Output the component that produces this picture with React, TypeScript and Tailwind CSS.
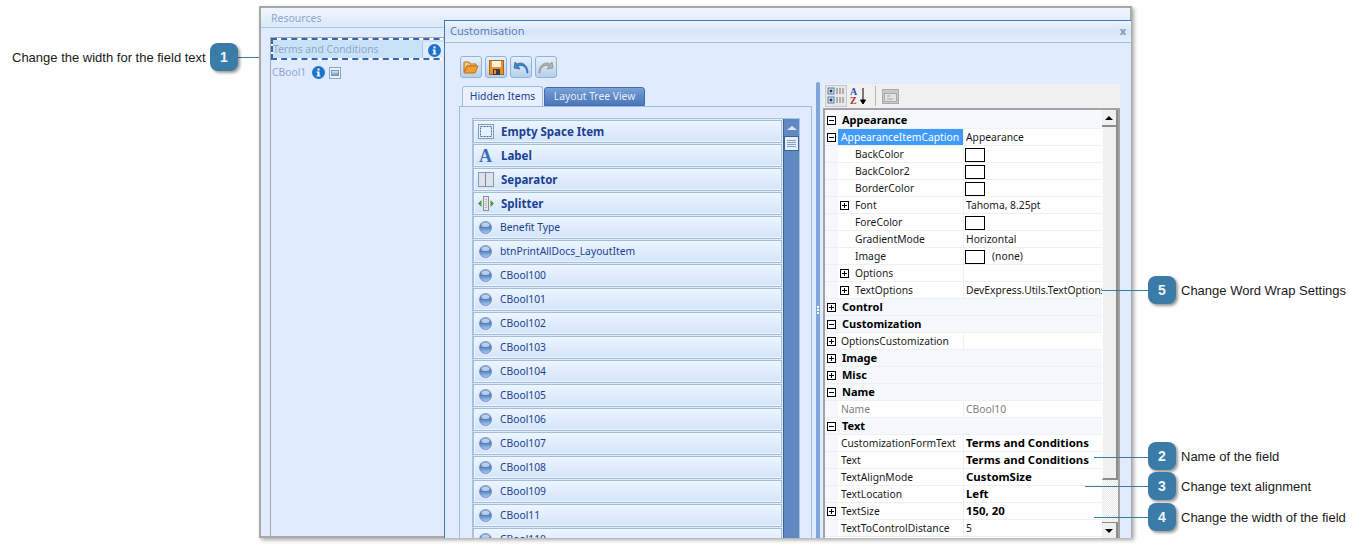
import React from "react";

type PropRow = {
  name: string;
  value?: string;
  category?: boolean;
  expander?: "plus" | "minus";
  nested?: boolean;
  swatch?: boolean;
  boldValue?: boolean;
  muted?: boolean;
  selected?: boolean;
};

const tahoma = "font-['Noto_Sans','DejaVu_Sans',sans-serif]";

const PROP_ROWS: PropRow[] = [
  { name: "Appearance", category: true, expander: "minus" },
  { name: "AppearanceItemCaption", value: "Appearance", expander: "minus", selected: true },
  { name: "BackColor", nested: true, swatch: true },
  { name: "BackColor2", nested: true, swatch: true },
  { name: "BorderColor", nested: true, swatch: true },
  { name: "Font", nested: true, expander: "plus", value: "Tahoma, 8.25pt" },
  { name: "ForeColor", nested: true, swatch: true },
  { name: "GradientMode", nested: true, value: "Horizontal" },
  { name: "Image", nested: true, swatch: true, value: "(none)" },
  { name: "Options", nested: true, expander: "plus" },
  { name: "TextOptions", nested: true, expander: "plus", value: "DevExpress.Utils.TextOptions" },
  { name: "Control", category: true, expander: "plus" },
  { name: "Customization", category: true, expander: "minus" },
  { name: "OptionsCustomization", expander: "plus" },
  { name: "Image", category: true, expander: "plus" },
  { name: "Misc", category: true, expander: "plus" },
  { name: "Name", category: true, expander: "minus" },
  { name: "Name", value: "CBool10", muted: true },
  { name: "Text", category: true, expander: "minus" },
  { name: "CustomizationFormText", value: "Terms and Conditions", boldValue: true },
  { name: "Text", value: "Terms and Conditions", boldValue: true },
  { name: "TextAlignMode", value: "CustomSize", boldValue: true },
  { name: "TextLocation", value: "Left", boldValue: true },
  { name: "TextSize", value: "150, 20", boldValue: true, expander: "plus" },
  { name: "TextToControlDistance", value: "5" },
];

const BOOL_ITEMS = [
  "Benefit Type",
  "btnPrintAllDocs_LayoutItem",
  "CBool100",
  "CBool101",
  "CBool102",
  "CBool103",
  "CBool104",
  "CBool105",
  "CBool106",
  "CBool107",
  "CBool108",
  "CBool109",
  "CBool11",
  "CBool110",
];

const CALLOUTS = [
  { n: 5, top: "top-[276px]", label: "Change Word Wrap Settings", line: "top-[290px] left-[1102px] w-[46px]" },
  { n: 2, top: "top-[442px]", label: "Name of the field", line: "top-[457px] left-[1094px] w-[54px]" },
  { n: 3, top: "top-[472px]", label: "Change text alignment", line: "top-[486px] left-[1085px] w-[63px]" },
  { n: 4, top: "top-[503px]", label: "Change the width of the field", line: "top-[517px] left-[1094px] w-[54px]" },
];

function Expander({ kind }: { kind: "plus" | "minus" }) {
  return (
    <svg width="9" height="9" viewBox="0 0 9 9" className="shrink-0">
      <rect x="0.5" y="0.5" width="8" height="8" fill="#fff" stroke="#000" />
      <path d="M2 4.5H7" stroke="#000" />
      {kind === "plus" ? <path d="M4.5 2V7" stroke="#000" /> : null}
    </svg>
  );
}

function InfoIcon() {
  return (
    <svg width="13" height="13" viewBox="0 0 13 13" className="shrink-0">
      <circle cx="6.5" cy="6.5" r="6.5" fill="#1b74c9" />
      <rect x="5.5" y="2.5" width="2" height="2" fill="#fff" />
      <path d="M4.5 5.5H7.5V9.5H8.5V10.5H4.5V9.5H5.5V6.5H4.5Z" fill="#fff" />
    </svg>
  );
}

function OrbIcon() {
  return (
    <svg width="13" height="13" viewBox="0 0 13 13">
      <defs>
        <linearGradient id="orb" x1="0" y1="0" x2="0" y2="1">
          <stop offset="0" stopColor="#8fb0dc" />
          <stop offset="0.45" stopColor="#4f7dbd" />
          <stop offset="1" stopColor="#b4cfee" />
        </linearGradient>
      </defs>
      <circle cx="6.5" cy="6.5" r="6" fill="url(#orb)" stroke="#5b83b8" strokeWidth="0.7" />
      <ellipse cx="6.5" cy="3.9" rx="4" ry="2.2" fill="#fff" opacity="0.55" />
    </svg>
  );
}

function ToolButton({ children }: { children: React.ReactNode }) {
  return (
    <div className="flex h-[22px] w-[22px] items-center justify-center rounded-[3px] border border-[#8fb3dc] bg-gradient-to-b from-[#e6f0fb] via-[#cfe0f4] to-[#b6cfec]">
      {children}
    </div>
  );
}

function ListRow({ label, bold, icon }: { label: string; bold?: boolean; icon: React.ReactNode }) {
  return (
    <div className="flex h-[23px] shrink-0 items-center border border-[#a3bedb] bg-gradient-to-b from-[#edf5fe] to-[#d3e5fa] shadow-[inset_0_0_0_1px_#eef5fd]">
      <div className="flex w-[23px] shrink-0 justify-center">{icon}</div>
      <span className={`${bold ? "ml-[4px] text-[11.5px] font-bold" : "ml-[3px] text-[10.3px]"} text-[#1c3f94]`}>{label}</span>
    </div>
  );
}

function PropertyRow({ row }: { row: PropRow }) {
  const bg = row.category ? "bg-[#f5f8fd]" : "bg-white";
  return (
    <div className={`flex h-[17px] shrink-0 border-b border-[#f0f0f0] ${bg}`}>
      <div className="flex w-[13px] shrink-0 items-center justify-center bg-[#f5f8fd]">
        {row.expander && !row.nested ? <Expander kind={row.expander} /> : null}
      </div>
      <div
        className={`flex w-[125px] shrink-0 items-center overflow-hidden whitespace-nowrap ${
          row.selected ? "bg-[#3f9bfb] text-white" : row.muted ? "text-[#808080]" : "text-[#1a1a1a]"
        } ${row.nested ? "pl-[2px]" : row.category ? "pl-[4px]" : "pl-[3px]"} ${
          row.category ? "text-[11px] font-bold text-black" : "pt-[1px]"
        }`}
      >
        {row.nested ? (
          <div className="flex w-[15px] shrink-0 items-center">
            {row.expander ? <Expander kind={row.expander} /> : null}
          </div>
        ) : null}
        {row.name}
      </div>
      {row.category ? null : (
        <div
          className={`flex min-w-0 flex-1 items-center gap-[7px] overflow-hidden whitespace-nowrap border-l border-[#f0f0f0] pl-[2px] ${
            row.boldValue ? "text-[11.4px] font-bold text-black" : row.muted ? "pt-[1px] text-[#808080]" : "pt-[1px] text-[#1a1a1a]"
          }`}
        >
          {row.swatch ? <div className="ml-[-1px] h-[14px] w-[20px] shrink-0 border border-black bg-white" /> : null}
          {row.value}
        </div>
      )}
    </div>
  );
}

function PropertyGrid() {
  return (
    <div className="flex h-full w-[297px] flex-col">
      <div className="flex h-[24px] shrink-0 items-center gap-[2px] bg-[#f0f0f0] pl-[2px]">
        <div className="flex h-[22px] w-[22px] items-center justify-center border border-[#c8c8c8] bg-[#e8e8e8]">
          <svg width="18" height="18" viewBox="0 0 18 18">
            <rect x="1" y="1" width="6" height="6" fill="#cfe2f7" stroke="#4d7fb8" />
            <rect x="1" y="10" width="6" height="6" fill="#cfe2f7" stroke="#4d7fb8" />
            <path d="M2.5 4H5.5M4 2.5V5.5M2.5 13H5.5M4 11.5V14.5" stroke="#000" />
            <path d="M9 2H17M9 4H17M9 6H17M9 11H17M9 13H17M9 15H17" stroke="#777" strokeDasharray="2 1" />
          </svg>
        </div>
        <svg width="20" height="20" viewBox="0 0 20 20">
          <text x="1" y="9" fontSize="10" fontWeight="700" fill="#2a52a8" fontFamily="Liberation Serif, serif">A</text>
          <text x="1" y="18" fontSize="10" fontWeight="700" fill="#a03030" fontFamily="Liberation Serif, serif">Z</text>
          <path d="M14 2V17M11.5 14L14 18L16.5 14Z" stroke="#000" fill="#000" strokeWidth="1" />
        </svg>
        <div className="ml-[4px] mr-[4px] h-[20px] w-px bg-[#b5b5b5]" />
        <svg width="17" height="15" viewBox="0 0 17 15">
          <rect x="0.5" y="0.5" width="16" height="14" fill="#c9c9c9" stroke="#a9a9a9" />
          <rect x="2.5" y="4.5" width="12" height="8" fill="#e2e2e2" stroke="#a9a9a9" />
          <path d="M5 7H8M5 10H11" stroke="#a0a0a0" />
        </svg>
      </div>
      <div className="flex min-h-0 flex-1 border-x-2 border-t-2 border-[#a3a3a3] bg-white">
        <div className="w-[277px] shrink-0 overflow-hidden">
          <div className="h-[2px] bg-[#f5f8fd]" />
          {PROP_ROWS.map((row, i) => (
            <PropertyRow key={`${row.name}-${i}`} row={row} />
          ))}
        </div>
        <div className="flex w-[16px] shrink-0 flex-col">
          <div className="flex h-[17px] shrink-0 items-center justify-center border-b-2 border-r-2 border-[#8c8c8c] bg-[#f0f0f0]">
            <div className="h-0 w-0 border-x-[4px] border-b-[4px] border-x-transparent border-b-black" />
          </div>
          <div className="h-[353px] shrink-0 border-b-2 border-r-2 border-[#8c8c8c] border-l border-l-white bg-[#f0f0f0]" />
          <div className="flex-1 bg-[repeating-conic-gradient(#e4e4e4_0_25%,#ffffff_0_50%)] bg-[length:2px_2px]" />
          <div className="flex h-[16px] shrink-0 items-center justify-center border-r-2 border-t border-[#8c8c8c] bg-[#f0f0f0]">
            <div className="h-0 w-0 border-x-[4px] border-t-[4px] border-x-transparent border-t-black" />
          </div>
        </div>
      </div>
    </div>
  );
}

function HiddenItemsPane() {
  return (
    <div className="flex h-full w-[353px] shrink-0 flex-col pt-[4px]">
      <div className="relative z-10 ml-[3px] flex h-[20px] shrink-0 items-end gap-[1px]">
        <div className="flex h-[20px] w-[81px] items-center justify-center rounded-t-[3px] border border-b-0 border-[#9dbde8] bg-[#e8f1fd] text-[#1c3f94]">
          Hidden Items
        </div>
        <div className="flex h-[19px] w-[101px] items-center justify-center rounded-t-[3px] border border-[#3f6cb0] bg-gradient-to-b from-[#7ba2d8] via-[#5f89c6] to-[#4d78b8] text-[#e6effb]">
          Layout Tree View
        </div>
      </div>
      <div className="flex min-h-0 flex-1 border border-b-0 border-[#9dbde8] pl-[12px] pr-[11px] pt-[11px]">
        <div className="flex min-h-0 flex-1 overflow-hidden border-x border-t border-[#a9c2dd]">
          <div className="mr-[1px] flex w-[309px] shrink-0 flex-col gap-[1px] pt-[1px]">
            <ListRow
              bold
              label="Empty Space Item"
              icon={
                <svg width="16" height="15" viewBox="0 0 16 15">
                  <rect x="0.5" y="0.5" width="15" height="14" fill="#e6effa" stroke="#8a9bb0" />
                  <rect x="2.5" y="2.5" width="11" height="10" fill="none" stroke="#3a6fb5" strokeDasharray="2 1" />
                </svg>
              }
            />
            <ListRow
              bold
              label="Label"
              icon={<span className="font-['Liberation_Serif',serif] text-[18px] leading-none font-bold text-[#3a6fb5]">A</span>}
            />
            <ListRow
              bold
              label="Separator"
              icon={
                <svg width="16" height="15" viewBox="0 0 16 15">
                  <rect x="0.5" y="0.5" width="15" height="14" fill="#dde3ea" stroke="#8a9bb0" />
                  <path d="M7.5 0V15" stroke="#7d8896" />
                </svg>
              }
            />
            <ListRow
              bold
              label="Splitter"
              icon={
                <svg width="16" height="15" viewBox="0 0 16 15">
                  <rect x="5.5" y="0.5" width="5" height="14" fill="#e4e6ea" stroke="#8a8f98" />
                  <path d="M8 3V12" stroke="#8a8f98" strokeDasharray="1 1" />
                  <path d="M0 7.5L3.5 4V11Z M16 7.5L12.5 4V11Z" fill="#4f9a2f" />
                </svg>
              }
            />
            {BOOL_ITEMS.map((label) => (
              <ListRow key={label} label={label} icon={<OrbIcon />} />
            ))}
          </div>
          <div className="flex w-[17px] shrink-0 flex-col border-x border-[#3f6299] bg-[#6089c3]">
            <div className="flex h-[17px] shrink-0 items-center justify-center">
              <div className="h-0 w-0 border-x-[5px] border-b-[4px] border-x-transparent border-b-[#dbe7f6]" />
            </div>
            <div className="flex h-[15px] shrink-0 flex-col items-center justify-center gap-[1px] border border-[#3f6299] bg-[#e4eefb]">
              <div className="h-px w-[9px] bg-[#8aa3c4]" />
              <div className="h-px w-[9px] bg-[#8aa3c4]" />
              <div className="h-px w-[9px] bg-[#8aa3c4]" />
              <div className="h-px w-[9px] bg-[#8aa3c4]" />
            </div>
          </div>
        </div>
      </div>
    </div>
  );
}

function Badge({ n, pos }: { n: number; pos: string }) {
  return (
    <div
      className={`absolute flex h-[28px] w-[28px] items-center justify-center rounded-[8px] bg-[#3a7ba8] font-['Liberation_Sans',sans-serif] text-[14px] font-bold text-[#eef5fa] shadow-[2px_2px_3px_rgba(0,0,0,0.4)] ${pos}`}
    >
      {n}
    </div>
  );
}

export default function App() {
  return (
    <div className={`relative h-[547px] w-[1363px] overflow-hidden bg-white text-[10.3px] ${tahoma}`}>
      {/* left callout */}
      <span className="absolute left-[12px] top-[50px] font-['Liberation_Sans',sans-serif] text-[13px] leading-[15px] text-[#1a1a1a]">
        Change the width for the field text
      </span>
      <div className="absolute left-[238px] top-[57px] h-px w-[33px] bg-[#3a7ba8]" />

      {/* resources window behind */}
      <div className="absolute left-[259px] top-[6px] flex h-[532px] w-[873px] flex-col border-2 border-[#a8a8a8] bg-[#e0ecfd] shadow-[2px_2px_4px_rgba(0,0,0,0.35)]">
        <div className="flex h-[20px] shrink-0 items-center border-b border-[#a9c8ee] bg-gradient-to-b from-[#f0f6fe] to-[#dbe8fa] pl-[10px] pt-[3px] text-[10.5px] text-[#8ea6cc]">
          Resources
        </div>
        <div className="flex min-h-0 flex-1 pl-[9px] pt-[9px]">
          <div className="w-[200px] border-l border-t border-[#a8a8a8]">
            <div className="h-[22px] border-2 border-dashed border-[#3565b5] bg-white">
              <div className="flex h-full items-center bg-[#c8e3f8] pt-[2px] text-[#8ea6cc]">
                <span className="flex h-full w-[150px] items-center border-r border-[#a9c8ee]">Terms and Conditions</span>
                <span className="flex h-full flex-1 items-center bg-[#e0ecfd] pl-[5px]">
                  <InfoIcon />
                </span>
              </div>
            </div>
            <div className="mt-[5px] flex items-center gap-[6px] pl-[1px] text-[#8ea6cc]">
              CBool1
              <div className="flex items-center gap-[4px]">
                <InfoIcon />
                <div className="flex h-[12px] w-[12px] items-center justify-center border border-[#8ea6cc] bg-[#e8f0fb]">
                  <div className="h-[6px] w-[8px] border border-[#7f97bb] bg-gradient-to-b from-[#dfe8f4] to-[#7f97bb]" />
                </div>
              </div>
            </div>
          </div>
        </div>
      </div>

      {/* customisation window on top */}
      <div className="absolute left-[444px] top-[20px] flex h-[518px] w-[687px] flex-col overflow-hidden border-l border-t border-[#3f78b5] bg-[#e0ecfd]">
        <div className="flex h-[22px] shrink-0 items-center justify-between border-b border-[#9dbde8] bg-gradient-to-b from-[#eef5fe] via-[#d6e5f9] to-[#e6f0fd] pl-[5px] pr-[5px] text-[11px] text-[#5b7fb0]">
          <span>Customisation</span>
          <span className="font-bold text-[#7f97bb]">x</span>
        </div>
        <div className="flex min-h-0 flex-1 flex-col pl-[14px] pt-[13px]">
          <div className="flex h-[22px] shrink-0 gap-[3px] pl-[1px]">
            <ToolButton>
              <svg width="16" height="14" viewBox="0 0 16 14">
                <path d="M1 2H6L7 4H13V6H4L1 12Z" fill="#f4c77a" stroke="#b9741c" />
                <path d="M4 6H15L12 13H1Z" fill="#f0a030" stroke="#b9741c" />
              </svg>
            </ToolButton>
            <ToolButton>
              <svg width="15" height="15" viewBox="0 0 15 15">
                <rect x="0.5" y="0.5" width="14" height="14" fill="#e8932a" stroke="#a8641a" />
                <rect x="3" y="1" width="9" height="6" fill="#fdf3df" />
                <rect x="4" y="9" width="7" height="6" fill="#3c3c3c" />
                <rect x="5" y="10" width="2" height="4" fill="#e8932a" />
              </svg>
            </ToolButton>
            <ToolButton>
              <svg width="16" height="13" viewBox="0 0 16 13">
                <path d="M14 12C14 6 9 3 5 5L7 8L1 7L2 1L4 3C9 0 15 4 15 12Z" fill="#3f84c9" stroke="#2a62a0" strokeWidth="0.7" />
              </svg>
            </ToolButton>
            <ToolButton>
              <svg width="16" height="13" viewBox="0 0 16 13">
                <path d="M2 12C2 6 7 3 11 5L9 8L15 7L14 1L12 3C7 0 1 4 1 12Z" fill="#b0b0b0" stroke="#8c8c8c" strokeWidth="0.7" />
              </svg>
            </ToolButton>
          </div>
          <div className="mt-[4px] flex min-h-0 flex-1">
            <HiddenItemsPane />
            <div className="ml-[4px] mr-[3px] flex w-[4px] shrink-0 flex-col items-center justify-center gap-[1px] rounded-t-[2px] bg-[#7ea6dc]">
              <div className="h-[2px] w-[2px] bg-white" />
              <div className="h-[2px] w-[2px] bg-white" />
              <div className="h-[2px] w-[2px] bg-white" />
            </div>
            <div className="pt-[2px]">
              <PropertyGrid />
            </div>
          </div>
        </div>
      </div>

      {/* callouts */}
      <Badge n={1} pos="left-[210px] top-[43px]" />
      {CALLOUTS.map((c) => (
        <React.Fragment key={c.n}>
          <div className={`absolute h-px bg-[#3a7ba8] ${c.line}`} />
          <Badge n={c.n} pos={`left-[1148px] ${c.top}`} />
          <span
            className={`absolute left-[1181px] flex h-[28px] items-center pt-[1px] font-['Liberation_Sans',sans-serif] text-[13px] text-[#1a1a1a] ${c.top}`}
          >
            {c.label}
          </span>
        </React.Fragment>
      ))}
    </div>
  );
}
